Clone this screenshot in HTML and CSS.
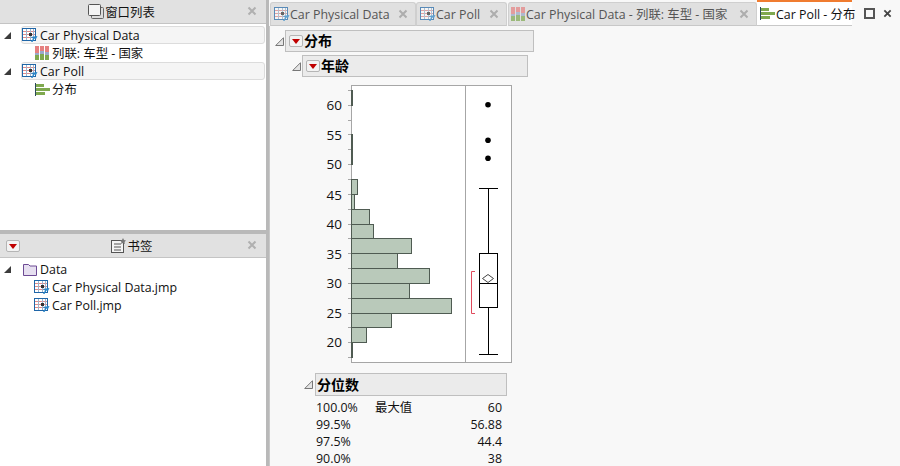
FILE: index.html
```html
<!DOCTYPE html>
<html lang="zh">
<head>
<meta charset="utf-8">
<title>Car Poll - 分布</title>
<link rel="stylesheet" href="styles.css">
</head>
<body>
<svg class="defs" width="0" height="0">
  <symbol id="i-table" viewBox="0 0 16 14">
    <rect x="0.5" y="0.5" width="13" height="12" fill="#fff" stroke="#1f66a8"/>
    <path d="M1 3.500H13M1 6.500H13M1 9.500H13" stroke="#e08a8a" fill="none"/>
    <path d="M4.500 1V12M8.500 1V12M11.500 1V12" stroke="#9db4cc" fill="none"/>
    <rect x="7" y="5" width="3" height="3" fill="#333"/>
    <path d="M9 14L11 10.500 8.500 9 15.500 8 14 11 12.500 10.500 10.500 14Z" fill="#2a86c8"/>
  </symbol>
  <symbol id="i-mosaic" viewBox="0 0 14 14">
    <rect x="0" y="0" width="4" height="7" fill="#e58080"/>
    <rect x="0" y="7" width="4" height="2" fill="#9aa9c9"/>
    <rect x="0" y="9" width="4" height="5" fill="#7fa94f"/>
    <rect x="5" y="0" width="4" height="5" fill="#e58080"/>
    <rect x="5" y="5" width="4" height="3" fill="#9aa9c9"/>
    <rect x="5" y="8" width="4" height="6" fill="#7fa94f"/>
    <rect x="10" y="0" width="4" height="6" fill="#e58080"/>
    <rect x="10" y="6" width="4" height="3" fill="#9aa9c9"/>
    <rect x="10" y="9" width="4" height="5" fill="#7fa94f"/>
  </symbol>
  <symbol id="i-dist" viewBox="0 0 15 13">
    <rect x="0" y="0" width="1" height="13" fill="#2c4a5a"/>
    <rect x="1" y="1" width="8" height="3" fill="#7fa94f"/>
    <rect x="1" y="5" width="14" height="3" fill="#7fa94f"/>
    <rect x="1" y="9" width="9" height="3" fill="#7fa94f"/>
  </symbol>
  <symbol id="i-close" viewBox="0 0 10 10">
    <path d="M1.500 1.500L8.500 8.500M8.500 1.500L1.500 8.500" stroke="currentColor" stroke-width="2" fill="none"/>
  </symbol>
  <symbol id="i-disclose" viewBox="0 0 9 9">
    <path d="M8.500 .7V8.500H.7Z" fill="#e4e4e4" stroke="#777"/>
  </symbol>
</svg>

<div class="app">
  <aside class="side">
    <section class="pane pane-top">
      <header class="pane-head head-windows">
        <svg class="head-icon" width="16" height="15" viewBox="0 0 16 15">
          <rect x="3.500" y="3.500" width="12" height="11" rx="1" fill="#ddd" stroke="#666"/>
          <rect x="0.500" y="0.500" width="12" height="11" rx="1" fill="#f4f4f4" stroke="#555"/>
        </svg>
        <span>窗口列表</span>
        <svg class="pane-close"><use href="#i-close"/></svg>
      </header>
      <ul class="tree">
        <li class="tree-row tree-root">
          <span class="tri"></span>
          <div class="root-box"><svg class="ic-table"><use href="#i-table"/></svg>Car Physical Data</div>
        </li>
        <li class="tree-row tree-child"><svg class="ic-mosaic"><use href="#i-mosaic"/></svg>列联: 车型 - 国家</li>
        <li class="tree-row tree-root">
          <span class="tri"></span>
          <div class="root-box"><svg class="ic-table"><use href="#i-table"/></svg>Car Poll</div>
        </li>
        <li class="tree-row tree-child"><svg class="ic-dist"><use href="#i-dist"/></svg>分布</li>
      </ul>
    </section>
    <section class="pane pane-bottom">
      <header class="pane-head head-marks">
        <span class="red-btn red-btn-head"></span>
        <svg class="head-icon" width="16" height="15" viewBox="0 0 16 15">
          <rect x="0.500" y="2.500" width="12" height="12" fill="#f4f4f4" stroke="#555"/>
          <path d="M3 6H10M3 9H10M3 12H10" stroke="#555"/>
          <path d="M12 0l1 2 2 .5-1.500 1.500.5 2-2-1-2 1 .5-2L9 2.500 11 2Z" fill="#777"/>
        </svg>
        <span>书签</span>
        <svg class="pane-close"><use href="#i-close"/></svg>
      </header>
      <ul class="tree tree-files">
        <li class="tree-row tree-folder">
          <span class="tri"></span>
          <svg class="ic-folder" width="14" height="13" viewBox="0 0 14 13">
            <path d="M.5 12.500V1.500H5.500L7 3H13.500V12.500Z" fill="#e6dff0" stroke="#6d4a94"/>
          </svg>
          Data
        </li>
        <li class="tree-row tree-child"><svg class="ic-table"><use href="#i-table"/></svg>Car Physical Data.jmp</li>
        <li class="tree-row tree-child"><svg class="ic-table"><use href="#i-table"/></svg>Car Poll.jmp</li>
      </ul>
    </section>
  </aside>

  <main class="work">
    <nav class="tabs">
      <div class="tab tab-1"><svg class="ic-table faded"><use href="#i-table"/></svg><span>Car Physical Data</span><svg class="tab-close"><use href="#i-close"/></svg></div>
      <div class="tab tab-2"><svg class="ic-table faded"><use href="#i-table"/></svg><span>Car Poll</span><svg class="tab-close"><use href="#i-close"/></svg></div>
      <div class="tab tab-3"><svg class="ic-mosaic faded"><use href="#i-mosaic"/></svg><span>Car Physical Data - 列联: 车型 - 国家</span><svg class="tab-close"><use href="#i-close"/></svg></div>
      <div class="tab tab-active"><svg class="ic-dist"><use href="#i-dist"/></svg><span>Car Poll - 分布</span></div>
      <div class="win-btns">
        <span class="win-max"></span>
        <svg class="win-close"><use href="#i-close"/></svg>
      </div>
    </nav>

    <div class="report">
      <div class="outline outline-1">
        <svg class="disclose"><use href="#i-disclose"/></svg>
        <div class="title-bar bar-1"><span class="red-btn"></span><b>分布</b></div>
      </div>
      <div class="outline outline-2">
        <svg class="disclose"><use href="#i-disclose"/></svg>
        <div class="title-bar bar-2"><span class="red-btn"></span><b>年龄</b></div>
      </div>

      <svg class="chart" width="240" height="279" viewBox="311 85 240 279">
        <g class="axis-labels">
          <text x="342" y="110">60</text>
          <text x="342" y="139.500">55</text>
          <text x="342" y="169">50</text>
          <text x="342" y="199.500">45</text>
          <text x="342" y="229">40</text>
          <text x="342" y="258.500">35</text>
          <text x="342" y="288">30</text>
          <text x="342" y="317.500">25</text>
          <text x="342" y="347">20</text>
        </g>
        <rect x="351.500" y="85.500" width="160" height="277" fill="#fff" stroke="#a6a6a6"/>
        <path d="M465.500 85V362" stroke="#a6a6a6"/>
        <path d="M348 90.500H351M348 105.500H351M348 120.500H351M348 134.500H351M348 149.500H351M348 164.500H351M348 179.500H351M348 194.500H351M348 209.500H351M348 224.500H351M348 238.500H351M348 253.500H351M348 268.500H351M348 283.500H351M348 298.500H351M348 313.500H351M348 327.500H351M348 342.500H351M348 357.500H351" stroke="#a6a6a6"/>
        <g fill="#b9c9ba" stroke="#4f5b52">
          <rect x="351.500" y="90.500" width="1" height="15"/>
          <rect x="351.500" y="134.500" width="1" height="30"/>
          <rect x="351.500" y="179.500" width="6" height="15"/>
          <rect x="351.500" y="194.500" width="3" height="15"/>
          <rect x="351.500" y="209.500" width="18" height="15"/>
          <rect x="351.500" y="224.500" width="22" height="14"/>
          <rect x="351.500" y="238.500" width="60" height="15"/>
          <rect x="351.500" y="253.500" width="46" height="15"/>
          <rect x="351.500" y="268.500" width="78" height="15"/>
          <rect x="351.500" y="283.500" width="58" height="15"/>
          <rect x="351.500" y="298.500" width="100" height="15"/>
          <rect x="351.500" y="313.500" width="40" height="14"/>
          <rect x="351.500" y="327.500" width="15" height="15"/>
          <rect x="351.500" y="342.500" width="1" height="15"/>
        </g>
        <g fill="#000">
          <circle cx="488" cy="104.700" r="2.800"/>
          <circle cx="488" cy="140.300" r="2.800"/>
          <circle cx="488" cy="158.200" r="2.800"/>
        </g>
        <g fill="none" stroke="#000">
          <path d="M479 188.500H498M488.500 188.500V253.500M488.500 307.500V354.500M479 354.500H498"/>
          <rect x="479.500" y="253.500" width="18" height="54" fill="#fff"/>
          <path d="M479.500 283.500H497.500"/>
        </g>
        <path d="M482.500 278.500L488 274.500 493.500 278.500 488 282.500Z" fill="#fff" stroke="#444"/>
        <path d="M475 271.500H471.500V313.500H475" fill="none" stroke="#e04a5c"/>
      </svg>

      <div class="outline outline-3">
        <svg class="disclose"><use href="#i-disclose"/></svg>
        <div class="title-bar bar-3"><b>分位数</b></div>
      </div>
      <table class="quant">
        <tr><td class="q-pct">100.0%</td><td class="q-name">最大值</td><td class="q-val">60</td></tr>
        <tr><td class="q-pct">99.5%</td><td class="q-name"></td><td class="q-val">56.88</td></tr>
        <tr><td class="q-pct">97.5%</td><td class="q-name"></td><td class="q-val">44.4</td></tr>
        <tr><td class="q-pct">90.0%</td><td class="q-name"></td><td class="q-val">38</td></tr>
      </table>
    </div>
  </main>
</div>
</body>
</html>
```

FILE: styles.css
```css
* { box-sizing: border-box; }
html, body { margin: 0; padding: 0; height: 100%; overflow: hidden; }
body {
  font-family: "Open Sans", "Noto Sans CJK SC", sans-serif;
  font-size: 12.4px;
  color: #111;
  background: #f8f8f8;
}
.defs { position: absolute; }
ul { list-style: none; margin: 0; padding: 0; }

.app { display: flex; width: 900px; height: 466px; }

/* left column */
.side { width: 269px; flex: none; display: flex; flex-direction: column; border-right: 3px solid #b9b9b9; background: #b9b9b9; }
.pane { background: #fff; }
.pane-top { height: 230px; flex: none; }
.pane-bottom { flex: 1; margin-top: 4px; }
.pane-head {
  height: 24px;
  background: #e1e1e1;
  border-bottom: 1px solid #c4c4c4;
  display: flex;
  align-items: center;
  justify-content: center;
  gap: 1px;
  position: relative;
}
.head-windows { padding-right: 23px; }
.head-marks { padding-right: 3px; }
.head-icon { flex: none; }
.pane-close { position: absolute; right: 9px; top: 6px; width: 10px; height: 10px; color: #b0b0b0; }
.red-btn-head { position: absolute; left: 6px; top: 6px; }

.tree { padding-top: 2px; }
.tree-row { display: flex; align-items: center; height: 18px; }
.tri {
  width: 0; height: 0; margin: 0 10px 0 4px; flex: none;
  border-style: solid; border-width: 0 0 7px 7px;
  border-color: transparent transparent #3c3c3c transparent;
}
.root-box {
  flex: 1; height: 18px; margin-right: 1px;
  display: flex; align-items: center;
  background: #f5f5f5;
  border: 1px solid #dcdcdc;
  border-radius: 3px;
}
.tree-child { padding-left: 35px; }
.tree-files { padding-top: 2px; }
.tree-files .tree-child { padding-left: 34px; }
.ic-table { width: 16px; height: 14px; flex: none; margin-right: 2px; }
.ic-mosaic { width: 14px; height: 14px; flex: none; margin-right: 3px; }
.ic-dist { width: 15px; height: 13px; flex: none; margin-right: 2px; }
.ic-folder { flex: none; margin: 0 3px 0 2px; }
.faded { opacity: .7; }

/* right side */
.work { flex: 1; min-width: 0; display: flex; flex-direction: column; }
.tabs { height: 26px; flex: none; display: flex; align-items: flex-end; padding-left: 1px; position: relative; }
.tab {
  height: 24px;
  display: flex;
  align-items: center;
  background: #e0e0e0;
  border: 1px solid #cfcfcf;
  border-bottom: 1px solid #c8c8c8;
  border-radius: 3px 3px 0 0;
  padding-left: 3px;
  color: #555;
  white-space: nowrap;
  position: relative;
}
.tab .ic-table { margin-right: 0; }
.tab .ic-mosaic { margin-right: 1px; }
.tab-1 { width: 146px; }
.tab-2 { width: 91px; }
.tab-3 { width: 249px; margin-left: 1px; padding-left: 2px; }
.tab-close { position: absolute; right: 7px; top: 6px; width: 10px; height: 10px; color: #adadad; }
.tab-active {
  width: 95px; height: 26px;
  background: #fff;
  border: 0;
  border-top: 2px solid #f07c30;
  border-bottom: 1px solid #c8c8c8;
  border-radius: 0;
  color: #111;
  padding-left: 3px;
}
.tab-active .ic-dist { margin-right: 1px; }
.win-btns { display: flex; align-items: center; height: 26px; gap: 8px; margin-left: 12px; }
.win-max { width: 11px; height: 11px; border: 2px solid #555; }
.win-close { width: 9px; height: 9px; color: #444; }

.report { flex: 1; min-height: 0; overflow: hidden; border-left: 1px solid #c8c8c8; padding-top: 4px; }
.outline { display: flex; align-items: center; }
.disclose { width: 9px; height: 9px; flex: none; }
.title-bar {
  display: flex; align-items: center;
  height: 22px;
  background: #ebebeb;
  border: 1px solid #bfbfbf;
  padding-left: 3px;
  padding-bottom: 2px;
  font-size: 14px;
  color: #000;
}
.title-bar b { margin-left: 1px; }
.red-btn {
  display: inline-flex; align-items: center; justify-content: center;
  width: 14px; height: 12px;
  background: #f3f3f3;
  border: 1px solid #b5b5b5;
  border-radius: 2px;
  flex: none;
}
.red-btn::after {
  content: "";
  border-style: solid; border-width: 5px 4px 0 4px;
  border-color: #c00000 transparent transparent transparent;
}
.title-bar .red-btn { margin-top: 2px; }
.outline-1 { padding-left: 5px; }
.outline-1 .disclose { margin-right: 1px; }
.bar-1 { width: 249px; }
.outline-2 { margin-top: 3px; padding-left: 22px; }
.outline-2 .disclose { margin-right: 1px; }
.bar-2 { width: 226px; }
.chart { display: block; margin: 8px 0 0 41px; }
.axis-labels text { font-size: 13.5px; text-anchor: end; fill: #111; }
.outline-3 { margin-top: 9px; padding-left: 34px; }
.outline-3 .disclose { margin-right: 2px; }
.bar-3 { width: 192px; height: 23px; padding-left: 0; }

.quant { border-collapse: collapse; margin: 2px 0 0 46px; width: 186px; }
.quant td { padding: 0; height: 17px; }
.q-pct { width: 59px; }
.q-val { text-align: right; }
```
